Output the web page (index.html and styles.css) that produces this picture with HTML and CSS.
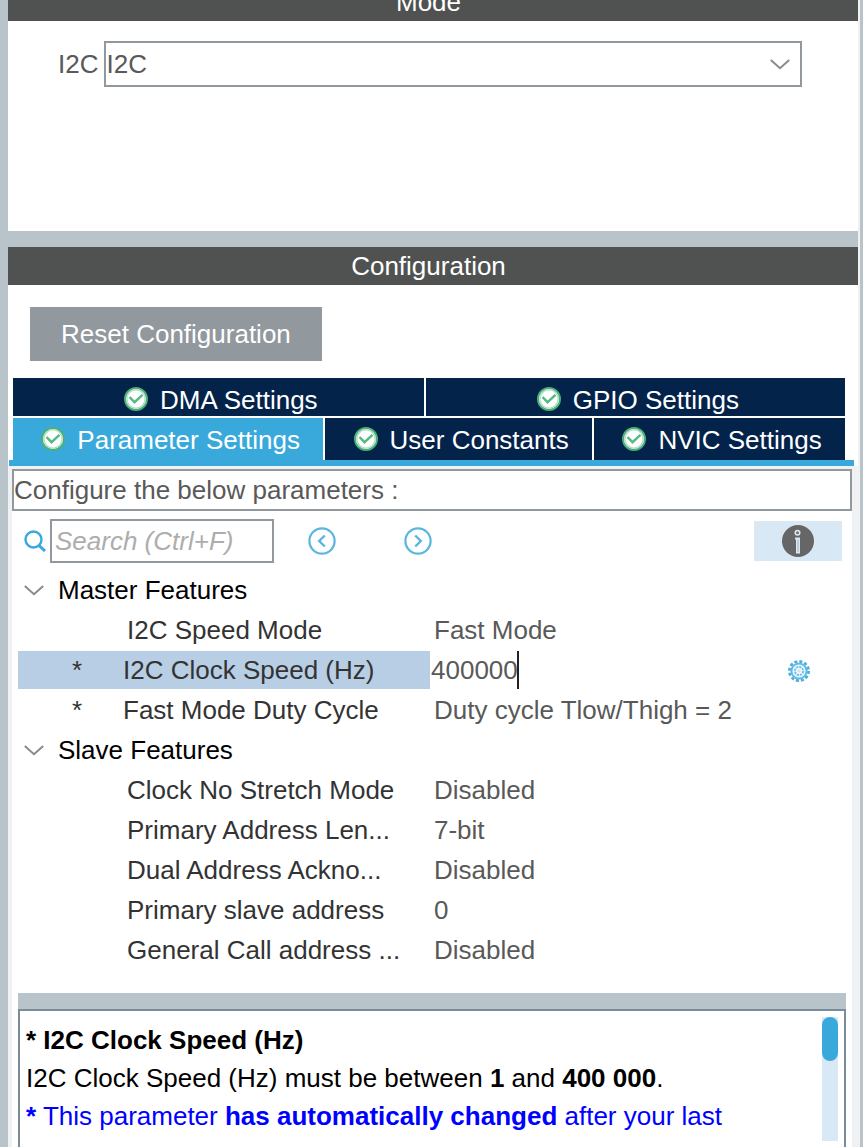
FILE: index.html
```html
<!DOCTYPE html>
<html lang="en">

<head>
  <meta charset="UTF-8" />
  <meta name="viewport" content="width=device-width, initial-scale=1.0" />
  <title>I2C Mode and Configuration</title>
  <link rel="stylesheet" href="styles.css">
</head>

<body>

  <!-- Shared icons -->
  <svg class="sprite" aria-hidden="true">
    <symbol id="check" viewBox="0 0 24 24">
      <circle cx="12" cy="12" r="11" fill="#fff" stroke="#4bb078" stroke-width="2" />
      <circle cx="12" cy="12" r="9.2" fill="none" stroke="#b5dfc7" stroke-width="1.6" />
      <path d="M5.5 10 L10.5 15.2 L18.5 7.8" fill="none" stroke="#55b982" stroke-width="2.4" />
    </symbol>
    <symbol id="chevron" viewBox="0 0 20 11">
      <path d="M0.8 1 L10 9.2 L19.2 1" fill="none" stroke="#8a8a8a" stroke-width="2" />
    </symbol>
  </svg>

  <main class="panel">

    <!-- Mode -->
    <section class="mode">
      <h2>Mode</h2>
      <div class="mode-row">
        <label for="i2c-mode">I2C</label>
        <div class="select-box">
          <select id="i2c-mode">
            <option>I2C</option>
            <option>Disable</option>
          </select>
          <svg class="chevron"><use href="#chevron" /></svg>
        </div>
      </div>
    </section>

    <!-- Configuration -->
    <section class="config">
      <h2>Configuration</h2>
      <button type="button" class="reset">Reset Configuration</button>

      <div class="tabs" role="tablist">
        <div class="tab-row">
          <button type="button" role="tab" class="tab"><svg><use href="#check" /></svg>DMA Settings</button>
          <button type="button" role="tab" class="tab"><svg><use href="#check" /></svg>GPIO Settings</button>
        </div>
        <div class="tab-row front">
          <button type="button" role="tab" class="tab active" aria-selected="true"><svg><use href="#check" /></svg>Parameter Settings</button>
          <button type="button" role="tab" class="tab"><svg><use href="#check" /></svg>User Constants</button>
          <button type="button" role="tab" class="tab"><svg><use href="#check" /></svg>NVIC Settings</button>
        </div>
      </div>
      <div class="tab-line"></div>

      <div class="tab-page">
        <p class="hint">Configure the below parameters :</p>

        <div class="content">
          <div class="toolbar">
            <label for="search" aria-label="Search">
              <svg class="search-icon" viewBox="0 0 22 22">
                <circle cx="9.5" cy="9.5" r="8" fill="none" stroke="#39a8dc" stroke-width="2.4" />
                <path d="M15 15.5 L21 21" stroke="#39a8dc" stroke-width="3" />
              </svg>
            </label>
            <input type="text" id="search" placeholder="Search (Ctrl+F)" />
            <button type="button" class="step" aria-label="Previous match">
              <svg viewBox="0 0 28 28">
                <circle cx="14" cy="14" r="12.6" fill="none" stroke="#58b6e1" stroke-width="2.2" />
                <path d="M16.8 8.5 L11.2 14 L16.8 19.5" fill="none" stroke="#58b6e1" stroke-width="2.4" />
              </svg>
            </button>
            <button type="button" class="step next" aria-label="Next match">
              <svg viewBox="0 0 28 28">
                <circle cx="14" cy="14" r="12.6" fill="none" stroke="#58b6e1" stroke-width="2.2" />
                <path d="M11.2 8.5 L16.8 14 L11.2 19.5" fill="none" stroke="#58b6e1" stroke-width="2.4" />
              </svg>
            </button>
            <button type="button" class="info" aria-label="Information">
              <svg viewBox="0 0 32 32">
                <circle cx="16" cy="16" r="16" fill="#666" />
                <circle cx="15.5" cy="7.8" r="2.3" fill="#777" stroke="#dce8f2" stroke-width="1.5" />
                <path d="M13 12.5 H18 V28.5 H14 V14.5 H13 Z" fill="#dce8f2" />
                <path d="M16 14.5 V27" stroke="#aab0b5" stroke-width="1" />
              </svg>
            </button>
          </div>

          <table class="params">
            <colgroup>
              <col class="name-col">
              <col>
            </colgroup>
            <tbody>
              <tr>
                <th colspan="2"><button type="button" class="group"><svg class="chevron"><use href="#chevron" /></svg>Master Features</button></th>
              </tr>
              <tr>
                <td>I2C Speed Mode</td>
                <td>Fast Mode</td>
              </tr>
              <tr class="changed selected">
                <td><span class="mark">*</span><label for="clock-speed">I2C Clock Speed (Hz)</label></td>
                <td>
                  <div class="edit">
                    <input type="text" id="clock-speed" value="400000" />
                    <span class="caret"></span>
                    <button type="button" class="gear" aria-label="Value options">
                      <svg viewBox="0 0 22 22">
                        <circle cx="11" cy="11" r="9.6" fill="none" stroke="#48b0df" stroke-width="2.8" stroke-dasharray="3 2.03" />
                        <circle cx="11" cy="11" r="7.6" fill="#e8f5fb" stroke="#63bbe4" stroke-width="2" />
                        <circle cx="11" cy="11" r="4" fill="#fff" stroke="#6fc1e6" stroke-width="2" stroke-dasharray="2.2 0.9" />
                        <path d="M11 9 V13 M9 11 H13" stroke="#b9e0f3" stroke-width="1" />
                      </svg>
                    </button>
                  </div>
                </td>
              </tr>
              <tr class="changed">
                <td><span class="mark">*</span>Fast Mode Duty Cycle</td>
                <td>Duty cycle Tlow/Thigh = 2</td>
              </tr>
            </tbody>
            <tbody>
              <tr>
                <th colspan="2"><button type="button" class="group"><svg class="chevron"><use href="#chevron" /></svg>Slave Features</button></th>
              </tr>
              <tr>
                <td>Clock No Stretch Mode</td>
                <td>Disabled</td>
              </tr>
              <tr>
                <td>Primary Address Len...</td>
                <td>7-bit</td>
              </tr>
              <tr>
                <td>Dual Address Ackno...</td>
                <td>Disabled</td>
              </tr>
              <tr>
                <td>Primary slave address</td>
                <td>0</td>
              </tr>
              <tr>
                <td>General Call address ...</td>
                <td>Disabled</td>
              </tr>
            </tbody>
          </table>

          <!-- Parameter description -->
          <div class="splitter"></div>
          <div class="description">
            <div class="description-text">
              <p><b>* I2C Clock Speed (Hz)</b></p>
              <p>I2C Clock Speed (Hz) must be between <b>1</b> and <b>400 000</b>.</p>
              <p class="notice"><b>*</b> This parameter <b>has automatically changed</b> after your last</p>
            </div>
            <div class="scrollbar">
              <div class="thumb"></div>
            </div>
          </div>
        </div>
      </div>
    </section>

  </main>

</body>

</html>
```

FILE: styles.css
```css
* {
  margin: 0;
  padding: 0;
  box-sizing: border-box;
}

body {
  font-family: "Liberation Sans", Arial, sans-serif;
  font-size: 26px;
  line-height: 38px;
  color: #595959;
  background: #b8c3ca;
  height: 100vh;
  overflow: hidden;
  display: flex;
}

button,
input,
select {
  font: inherit;
  color: inherit;
  border: none;
  border-radius: 0;
  background: none;
  outline: none;
}

button {
  cursor: pointer;
}

svg {
  display: block;
  flex: none;
}

.sprite {
  position: absolute;
  width: 0;
  height: 0;
}

.chevron {
  width: 20px;
  height: 11px;
}

/* the panel is scrolled a little, so the first title is cut */
.panel {
  flex: 1;
  min-width: 0;
  margin: -17px 3px 0 8px;
  border-right: 2px solid #f0f1f3;
  display: flex;
  flex-direction: column;
  gap: 16px;
}

h2 {
  padding-right: 9px;
  background: #505251;
  color: #fff;
  font-size: 26px;
  font-weight: normal;
  text-align: center;
}

/* Mode */
.mode {
  background: #fff;
  padding-bottom: 144px;
}

.mode-row {
  display: flex;
  align-items: center;
  gap: 6px;
  padding: 20px 56px 0 50px;
}

.select-box {
  flex: 1;
  display: grid;
  align-items: center;
}

.select-box select {
  grid-area: 1 / 1;
  width: 100%;
  height: 46px;
  border: 2px solid #91989e;
  appearance: none;
}

.select-box .chevron {
  grid-area: 1 / 1;
  justify-self: end;
  margin-right: 12px;
  pointer-events: none;
}

/* Configuration */
.config {
  flex: 1;
  min-height: 0;
  background: #fff;
  display: flex;
  flex-direction: column;
}

.reset {
  align-self: flex-start;
  margin: 22px 22px 17px;
  padding: 8px 31px;
  background: #91989e;
  color: #fff;
}

.tabs {
  display: flex;
  flex-direction: column;
  gap: 2px;
  padding: 0 13px 0 5px;
}

.tab-row {
  display: flex;
  gap: 2px;
}

.tab {
  flex: 1 1 auto;
  height: 38px;
  padding: 6px 0 0 5px;
  display: flex;
  align-items: center;
  justify-content: center;
  gap: 12px;
  background: #03234b;
  color: #fff;
  white-space: nowrap;
}

.front .tab {
  height: 42px;
  padding-top: 2px;
}

.tab.active {
  background: #39a9dc;
}

.tab svg {
  width: 24px;
  height: 24px;
  margin-bottom: 2px;
}

.tab-line {
  height: 6px;
  margin: 0 4px 0 1px;
  background: #39a9dc;
}

.tab-page {
  flex: 1;
  min-height: 0;
  background: #f0f1f3;
  padding: 3px 6px 0 4px;
  display: flex;
  flex-direction: column;
}

.hint {
  background: #fff;
  border: 2px solid #91989e;
}

.content {
  flex: 1;
  min-height: 0;
  background: #fff;
  padding: 0 6px;
  display: flex;
  flex-direction: column;
}

.toolbar {
  display: flex;
  align-items: center;
  padding: 8px 4px 6px 6px;
}

.search-icon {
  width: 22px;
  height: 22px;
  margin-right: 4px;
}

#search {
  width: 224px;
  height: 44px;
  padding: 0 3px;
  border: 2px solid #91989e;
}

#search::placeholder {
  color: #adadad;
  font-style: italic;
}

.step {
  margin-left: 34px;
}

.step.next {
  margin-left: 68px;
}

.step svg {
  width: 28px;
  height: 28px;
}

.info {
  margin-left: auto;
  padding: 4px 28px;
  background: #d9e8f5;
}

.info svg {
  width: 32px;
  height: 32px;
}

/* Parameter tree */
.params {
  width: 100%;
  table-layout: fixed;
  border-spacing: 0 2px;
  margin-bottom: 22px;
}

.name-col {
  width: 412px;
}

.params th {
  color: #000;
  font-weight: normal;
  text-align: left;
}

.group {
  display: flex;
  align-items: center;
  gap: 14px;
  padding-left: 6px;
}

.params td {
  padding-left: 4px;
  white-space: nowrap;
}

.params td:first-child {
  padding-left: 109px;
  color: #333;
}

.params .changed td:first-child {
  padding-left: 54px;
}

.mark {
  display: inline-block;
  width: 51px;
}

.selected td:first-child {
  background: #b8cee5;
}

.params .selected td:last-child {
  padding-left: 0;
}

.edit {
  display: flex;
  align-items: center;
}

.edit input {
  width: 87px;
  height: 38px;
  padding-left: 1px;
}

.caret {
  width: 2px;
  height: 38px;
  background: #222;
}

.gear {
  margin: 2px 36px 0 auto;
}

.gear svg {
  width: 22px;
  height: 22px;
}

/* Description */
.splitter {
  height: 16px;
  background: #b8c3ca;
}

.description {
  flex: 1;
  min-height: 0;
  display: flex;
  border: 2px solid #7a8b99;
  border-bottom: none;
  padding: 6px;
}

.description-text {
  flex: 1;
  padding-top: 4px;
  color: #000;
}

.notice {
  color: #00f;
}

.scrollbar {
  width: 16px;
  background: #d9e8f5;
}

.thumb {
  height: 44px;
  border-radius: 8px;
  background: #39a9dc;
}
```
